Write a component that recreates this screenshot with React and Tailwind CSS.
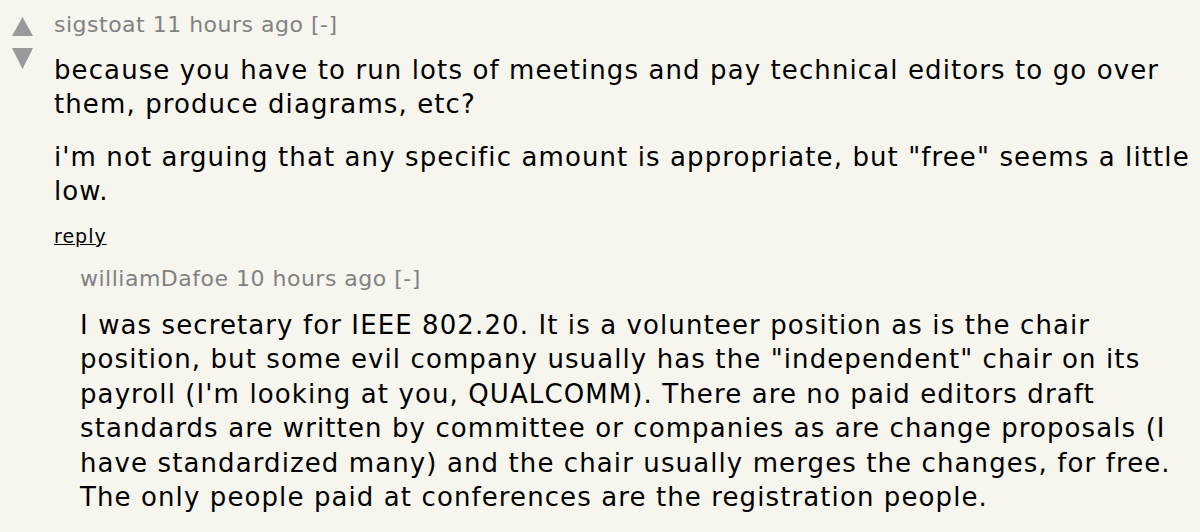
import React from "react";

function VoteArrows() {
  return (
    <div className="flex w-[54px] shrink-0 flex-col pl-[12px] pt-[7px]">
      <svg width="21" height="19" viewBox="0 0 21 19">
        <polygon points="10.5,0 21,19 0,19" fill="#9a9a9a" />
      </svg>
      <svg width="21" height="21" viewBox="0 0 21 21" className="mt-[12px]">
        <polygon points="0,0 21,0 10.5,21" fill="#9a9a9a" />
      </svg>
    </div>
  );
}

export default function App() {
  return (
    <div className="h-[532px] w-[1200px] overflow-hidden bg-[#f6f6ef] font-['DejaVu_Sans',Verdana,sans-serif] text-black">
      <div className="flex pt-[10px]">
        <VoteArrows />
        <div className="flex-1 pr-[6px]">
          <div className="text-[22px] leading-[30px] tracking-[0.5px] text-[#828282]">
            sigstoat 11 hours ago [-]
          </div>
          <div className="mt-[13px] text-[26px] leading-[34px] tracking-[1.1px]">
            <p>
              because you have to run lots of meetings and pay technical editors to go over
              them, produce diagrams, etc?
            </p>
            <p className="mt-[19px]">
              i'm not arguing that any specific amount is appropriate, but "free" seems a little
              low.
            </p>
          </div>
          <div className="mt-[15px] text-[19px] leading-[26px] tracking-[1px]">
            <a className="underline" href="#">reply</a>
          </div>

          <div className="pl-[26px]">
            <div className="mt-[15px] text-[22px] leading-[30px] tracking-[0.5px] text-[#828282]">
              williamDafoe 10 hours ago [-]
            </div>
            <div className="mt-[14px] text-[26px] leading-[34.4px] tracking-[1.1px]">
              <p>
                I was secretary for IEEE 802.20. It is a volunteer position as is the chair
                position, but some evil company usually has the "independent" chair on its
                payroll (I'm looking at you, QUALCOMM). There are no paid editors draft
                standards are written by committee or companies as are change proposals (I
                have standardized many) and the chair usually merges the changes, for free.
                The only people paid at conferences are the registration people.
              </p>
            </div>
          </div>
        </div>
      </div>
    </div>
  );
}
